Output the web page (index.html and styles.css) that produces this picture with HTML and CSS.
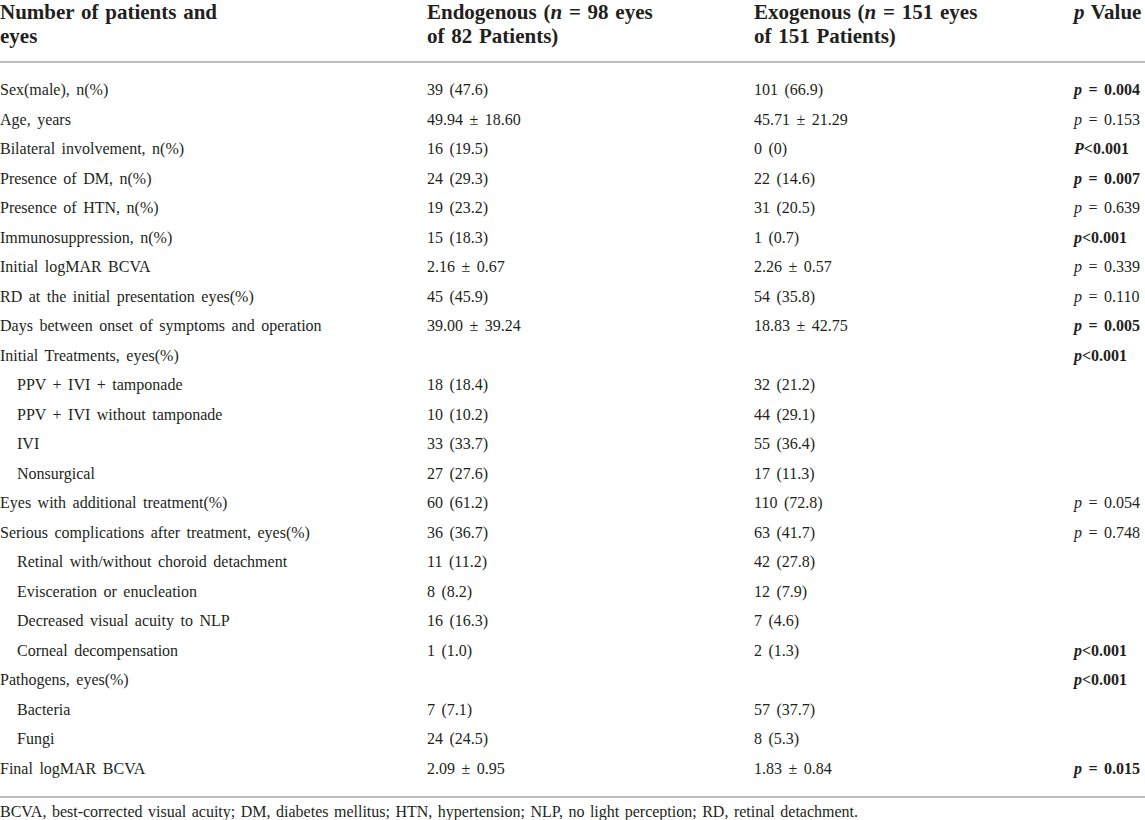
FILE: index.html
```html
<!DOCTYPE html>
<html lang="en">
<head>
  <meta charset="UTF-8">
  <meta name="viewport" content="width=device-width, initial-scale=1.0">
  <title>Endophthalmitis patients</title>
  <link rel="stylesheet" href="styles.css">
</head>
<body>
  <div class="table-wrap">
    <table class="data-table">
      <colgroup>
        <col class="col-label">
        <col class="col-endo">
        <col class="col-exo">
        <col class="col-p">
      </colgroup>
      <thead>
        <tr>
          <th>Number of patients and<br>eyes</th>
          <th>Endogenous (<i>n</i> = 98 eyes<br>of 82 Patients)</th>
          <th>Exogenous (<i>n</i> = 151 eyes<br>of 151 Patients)</th>
          <th><i>p</i> Value</th>
        </tr>
      </thead>
      <tbody>
        <tr><td>Sex(male), n(%)</td><td>39 (47.6)</td><td>101 (66.9)</td><td class="sig"><i>p</i> = 0.004</td></tr>
        <tr><td>Age, years</td><td>49.94 ± 18.60</td><td>45.71 ± 21.29</td><td><i>p</i> = 0.153</td></tr>
        <tr><td>Bilateral involvement, n(%)</td><td>16 (19.5)</td><td>0 (0)</td><td class="sig"><i>P</i>&lt;0.001</td></tr>
        <tr><td>Presence of DM, n(%)</td><td>24 (29.3)</td><td>22 (14.6)</td><td class="sig"><i>p</i> = 0.007</td></tr>
        <tr><td>Presence of HTN, n(%)</td><td>19 (23.2)</td><td>31 (20.5)</td><td><i>p</i> = 0.639</td></tr>
        <tr><td>Immunosuppression, n(%)</td><td>15 (18.3)</td><td>1 (0.7)</td><td class="sig"><i>p</i>&lt;0.001</td></tr>
        <tr><td>Initial logMAR BCVA</td><td>2.16 ± 0.67</td><td>2.26 ± 0.57</td><td><i>p</i> = 0.339</td></tr>
        <tr><td>RD at the initial presentation eyes(%)</td><td>45 (45.9)</td><td>54 (35.8)</td><td><i>p</i> = 0.110</td></tr>
        <tr><td>Days between onset of symptoms and operation</td><td>39.00 ± 39.24</td><td>18.83 ± 42.75</td><td class="sig"><i>p</i> = 0.005</td></tr>
        <tr><td>Initial Treatments, eyes(%)</td><td></td><td></td><td class="sig"><i>p</i>&lt;0.001</td></tr>
        <tr><td class="sub">PPV + IVI + tamponade</td><td>18 (18.4)</td><td>32 (21.2)</td><td></td></tr>
        <tr><td class="sub">PPV + IVI without tamponade</td><td>10 (10.2)</td><td>44 (29.1)</td><td></td></tr>
        <tr><td class="sub">IVI</td><td>33 (33.7)</td><td>55 (36.4)</td><td></td></tr>
        <tr><td class="sub">Nonsurgical</td><td>27 (27.6)</td><td>17 (11.3)</td><td></td></tr>
        <tr><td>Eyes with additional treatment(%)</td><td>60 (61.2)</td><td>110 (72.8)</td><td><i>p</i> = 0.054</td></tr>
        <tr><td>Serious complications after treatment, eyes(%)</td><td>36 (36.7)</td><td>63 (41.7)</td><td><i>p</i> = 0.748</td></tr>
        <tr><td class="sub">Retinal with/without choroid detachment</td><td>11 (11.2)</td><td>42 (27.8)</td><td></td></tr>
        <tr><td class="sub">Evisceration or enucleation</td><td>8 (8.2)</td><td>12 (7.9)</td><td></td></tr>
        <tr><td class="sub">Decreased visual acuity to NLP</td><td>16 (16.3)</td><td>7 (4.6)</td><td></td></tr>
        <tr><td class="sub">Corneal decompensation</td><td>1 (1.0)</td><td>2 (1.3)</td><td class="sig"><i>p</i>&lt;0.001</td></tr>
        <tr><td>Pathogens, eyes(%)</td><td></td><td></td><td class="sig"><i>p</i>&lt;0.001</td></tr>
        <tr><td class="sub">Bacteria</td><td>7 (7.1)</td><td>57 (37.7)</td><td></td></tr>
        <tr><td class="sub">Fungi</td><td>24 (24.5)</td><td>8 (5.3)</td><td></td></tr>
        <tr><td>Final logMAR BCVA</td><td>2.09 ± 0.95</td><td>1.83 ± 0.84</td><td class="sig"><i>p</i> = 0.015</td></tr>
      </tbody>
    </table>
    <p class="footnote">BCVA, best-corrected visual acuity; DM, diabetes mellitus; HTN, hypertension; NLP, no light perception; RD, retinal detachment.</p>
  </div>
</body>
</html>
```

FILE: styles.css
```css
body {
  margin: 0;
  background-color: #fff;
  color: #231f20;
  font-family: "Liberation Serif", "Times New Roman", serif;
}

.table-wrap {
  width: 1145px;
}

.data-table {
  width: 1145px;
  border-collapse: collapse;
  table-layout: fixed;
}

.col-label {
  width: 427px;
}

.col-endo {
  width: 327px;
}

.col-exo {
  width: 320px;
}

.col-p {
  width: 71px;
}

.data-table th {
  text-align: left;
  vertical-align: top;
  font-size: 21px;
  font-weight: bold;
  line-height: 24px;
  word-spacing: 1.5px;
  padding: 0 0 13px 0;
  border-bottom: 2px solid #bdbdbd;
  white-space: nowrap;
}

.data-table td {
  font-size: 16px;
  line-height: 29.5px;
  word-spacing: 2.5px;
  padding: 0;
  white-space: nowrap;
}

.data-table tbody tr:first-child td {
  padding-top: 12px;
}

.data-table tbody tr:last-child td {
  padding-bottom: 13px;
  border-bottom: 2px solid #bdbdbd;
}

.data-table td.sub {
  padding-left: 17px;
}

.data-table td.sig {
  font-weight: bold;
}

.footnote {
  margin: 4px 0 0 0;
  font-size: 16px;
  line-height: 20px;
  word-spacing: 1.5px;
}
```
